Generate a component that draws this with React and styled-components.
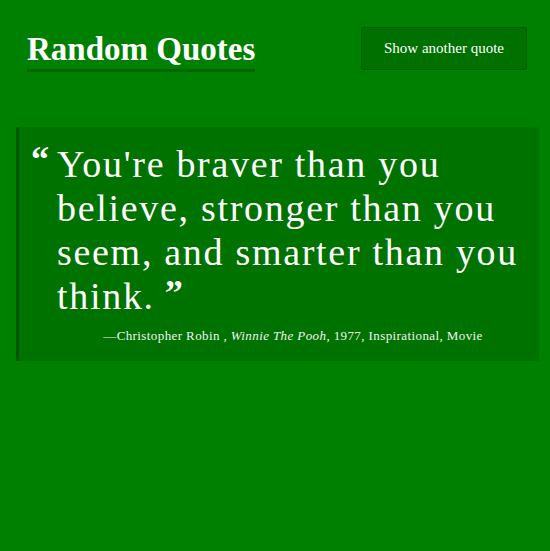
import React from 'react';
import styled, { createGlobalStyle } from 'styled-components';

const GlobalStyle = createGlobalStyle`
  html, body {
    margin: 0;
    padding: 0;
    background-color: #008000;
  }
  body {
    font-family: "Liberation Serif", "Times New Roman", serif;
    color: #ffffff;
  }
`;

const Page = styled.div`
  min-height: 551px;
  background-color: #008000;
  padding: 27px 11px 0 16px;
  box-sizing: border-box;
`;

const Header = styled.header`
  display: flex;
  justify-content: space-between;
  align-items: flex-start;
  padding: 0 12px 0 11px;
`;

const Title = styled.a`
  display: block;
  font-size: 33px;
  font-weight: bold;
  color: #ffffff;
  text-decoration: none;
  line-height: 40px;
  padding-top: 2px;
  border-bottom: 3px solid #006400;
`;

const Button = styled.button`
  width: 166px;
  height: 43px;
  background-color: #007000;
  border: 1px solid #005c00;
  border-radius: 2px;
  color: #ffffff;
  font-family: inherit;
  font-size: 15px;
  cursor: pointer;
`;

const Quote = styled.blockquote`
  margin: 55px 0 0;
  width: 523px;
  box-sizing: border-box;
  background-color: #007200;
  border-left: 3px solid #005800;
  padding: 15px 10px 17px 12px;
`;

const Text = styled.p`
  margin: 0;
  padding-left: 26px;
  font-size: 38px;
  letter-spacing: 1.7px;
  line-height: 44px;
`;

const Mark = styled.span`
  display: inline-block;
  width: ${(props) => (props.open ? '26px' : 'auto')};
  margin-left: ${(props) => (props.open ? '-26px' : '10px')};
  font-size: 36px;
  font-weight: bold;
  letter-spacing: 0;
  line-height: 24px;
  vertical-align: ${(props) => (props.open ? '6px' : '4px')};
`;

const Cite = styled.footer`
  margin-top: 10px;
  padding-left: 26px;
  text-align: center;
  font-size: 13px;
  letter-spacing: 0.4px;
  color: #f2f2f2;
`;

export default function App() {
  return (
    <Page>
      <GlobalStyle />
      <Header>
        <Title href="#">Random Quotes</Title>
        <Button>Show another quote</Button>
      </Header>
      <Quote>
        <Text>
          <Mark open>“</Mark>You're braver than you believe, stronger than you seem, and smarter than you think.<Mark>”</Mark>
        </Text>
        <Cite>
          —Christopher Robin , <i>Winnie The Pooh</i>, 1977, Inspirational, Movie
        </Cite>
      </Quote>
    </Page>
  );
}
